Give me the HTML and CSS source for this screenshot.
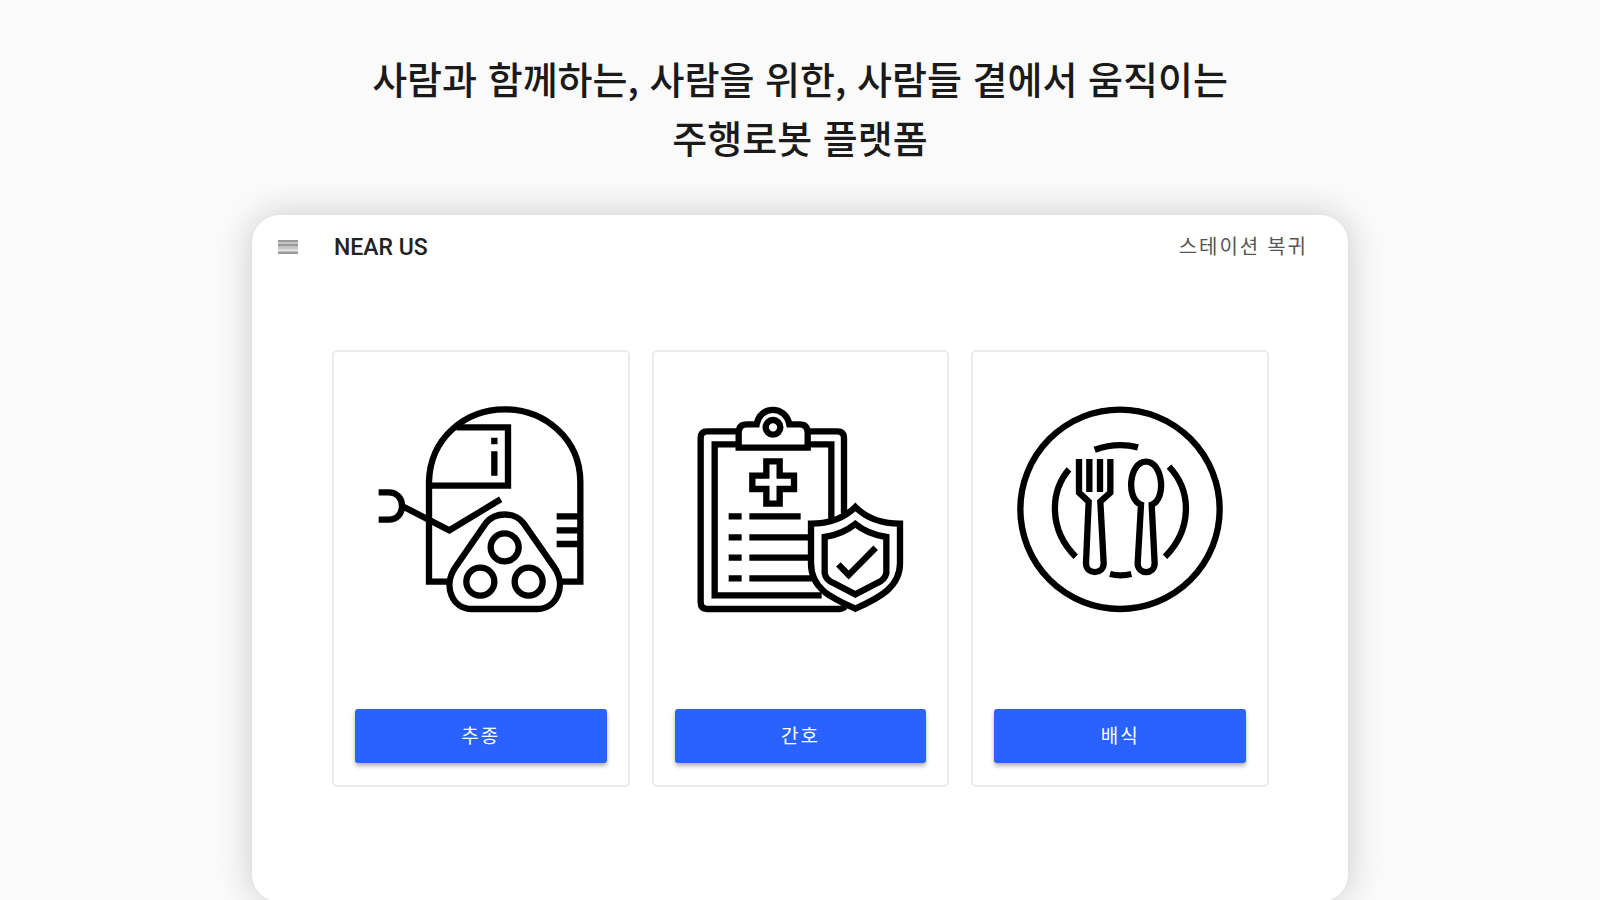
FILE: index.html
```
<!DOCTYPE html>
<html lang="ko">

<head>
    <meta charset="UTF-8">
    <meta name="viewport" content="width=device-width, initial-scale=1.0">
    <title>NEAR US</title>
    <link rel="stylesheet" href="styles.css">
</head>

<body>
    <h1 class="title">사람과 함께하는, 사람을 위한, 사람들 곁에서 움직이는<br>주행로봇 플랫폼</h1>
    <main class="panel">
        <header class="top-bar">
            <button class="menu-btn" aria-label="메뉴">
                <svg viewBox="0 0 20 14">
                    <rect width="20" height="14" fill="#c4c4c4" />
                    <path d="M0 1h20M0 5h20M0 13h20" stroke="#999" stroke-width="2" />
                    <path d="M0 10h20" stroke="#dedede" stroke-width="2" />
                </svg>
            </button>
            <span class="brand">NEAR US</span>
            <button class="return-btn">스테이션 복귀</button>
        </header>
        <div class="cards">
            <!--robot-->
            <section class="card">
                <svg class="icon" viewBox="54 48 618 618">
                    <path d="M268 575H207V275C210 145 315 58 434 58S660 145 661 275V575H600" />
                    <path d="M290 112H444V287H207M590 379H661M590 421H661M590 462H661" />
                    <path d="M403 143V163M403 184V257" />
                    <path d="M56 307H86C112 307 126 326 126 348S112 389 86 389H56M126 348L268 421L422 328" />
                    <path d="M378 399C405 365 463 365 490 399L583 532C621 588 590 657 530 657H336C276 657 248 588 286 532Z" />
                    <circle cx="434" cy="472" r="42" />
                    <circle cx="361" cy="575" r="42" />
                    <circle cx="506" cy="575" r="42" />
                </svg>
                <button class="card-btn">추종</button>
            </section>
            <!--clipboard with shield-->
            <section class="card">
                <svg class="icon" viewBox="51 48 618 618">
                    <path d="M176 124H82Q62 124 62 144V637Q62 657 82 657H476Q488 657 496 650M385 124H472Q492 124 492 144V370" />
                    <path d="M176 163H104V616H425M385 163H454V390" />
                    <path d="M176 173V128Q176 103 201 103H230C240 45 317 45 328 103H358Q383 103 383 128V173Z" />
                    <circle cx="279" cy="112" r="22" />
                    <path d="M259 214H299V257H342V297H299V341H259V297H217V257H259Z" />
                    <path d="M146 379H185M146 442H185M146 503H185M146 565H185M208 379H362M208 442H390M208 503H390M208 565H398" />
                    <path d="M526 351C490 387 445 401 393 401V520C393 595 450 622 526 656C602 622 660 590 660 520V401C608 401 562 387 526 351Z" />
                    <path d="M526 402Q488 433 434 441V550Q438 570 460 579L526 613L592 579Q614 570 619 550V441Q564 433 526 402Z" />
                    <path d="M475 523L506 555L587 473" />
                </svg>
                <button class="card-btn">간호</button>
            </section>
            <!--plate-->
            <section class="card">
                <svg class="icon" viewBox="51 48 618 618">
                    <circle cx="360" cy="358" r="299" />
                    <path d="M284 179Q350 156 414 172M330 552Q362 560 394 552M207 238C150 305 145 418 227 500M507 230C578 305 575 420 495 500" />
                    <path d="M237 207V308L266 335L258 520C258 555 311 555 311 520L301 335L331 308V207M268 207V306M300 207V306" />
                    <path d="M423 344C376 326 388 215 438 215S501 326 455 344L464 520C464 555 413 555 413 520Z" />
                </svg>
                <button class="card-btn">배식</button>
            </section>
        </div>
    </main>
</body>

</html>
```
FILE: styles.css
```
* {
    box-sizing: border-box;
}

body {
    display: flex;
    flex-direction: column;
    align-items: center;
    margin: 0;
    padding-top: 48px;
    background-color: #fafafa;
    font-family: Roboto, "Noto Sans CJK KR", sans-serif;
}

button {
    border: none;
    background: none;
    padding: 0;
    font-family: inherit;
    cursor: pointer;
}

.title {
    margin: 0;
    color: #1a1a1a;
    font-family: "Noto Sans CJK KR", sans-serif;
    font-size: 38px;
    font-weight: 500;
    line-height: 59px;
    text-align: center;
}

.panel {
    width: 90%;
    max-width: 1096px;
    margin-top: 49px;
    padding-bottom: 115px;
    border-radius: 28px;
    background-color: white;
    box-shadow: 0 0 36px rgba(0, 0, 0, 0.2);
}

.top-bar {
    display: flex;
    align-items: center;
    height: 64px;
    padding: 0 40px 0 26px;
}

.menu-btn {
    display: flex;
    width: 20px;
    margin-right: 36px;
}

.menu-btn svg {
    width: 20px;
    height: 14px;
}

.brand {
    color: #222;
    font-size: 23px;
    font-weight: 500;
}

.return-btn {
    margin-left: auto;
    padding-bottom: 4px;
    color: #555;
    font-size: 20px;
    letter-spacing: 2px;
}

.cards {
    display: grid;
    grid-template-columns: repeat(3, 1fr);
    gap: 22px;
    padding: 71px 79px 0 80px;
}

.card {
    display: flex;
    flex-direction: column;
    align-items: center;
    padding: 54px 21px 22px;
    border: 2px solid #ebebeb;
    border-radius: 5px;
}

.icon {
    width: 206px;
    max-width: 100%;
    overflow: visible;
    fill: none;
    stroke: #000;
    stroke-width: 19px;
}

.card-btn {
    width: 100%;
    height: 54px;
    margin-top: 97px;
    padding-bottom: 4px;
    border-radius: 3px;
    background-color: #2962ff;
    box-shadow: 0 3px 4px rgba(0, 0, 0, 0.3);
    color: white;
    font-size: 19px;
    letter-spacing: 2px;
}
```
